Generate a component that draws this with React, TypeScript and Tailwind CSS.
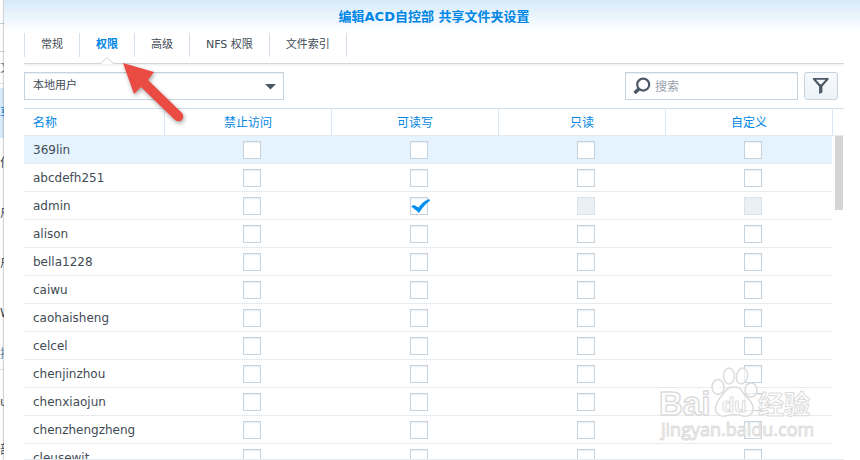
import React, { useState } from 'react';

type Access = 'deny' | 'write' | 'read' | 'custom';

interface UserRow {
    name: string;
    checked?: Access;
    disabled?: Access[];
}

const TABS = ['常规', '权限', '高级', 'NFS 权限', '文件索引'];

const COLUMNS: { id: Access; label: string }[] = [
    { id: 'deny', label: '禁止访问' },
    { id: 'write', label: '可读写' },
    { id: 'read', label: '只读' },
    { id: 'custom', label: '自定义' },
];

const USERS: UserRow[] = [
    { name: '369lin' },
    { name: 'abcdefh251' },
    { name: 'admin', checked: 'write', disabled: ['read', 'custom'] },
    { name: 'alison' },
    { name: 'bella1228' },
    { name: 'caiwu' },
    { name: 'caohaisheng' },
    { name: 'celcel' },
    { name: 'chenjinzhou' },
    { name: 'chenxiaojun' },
    { name: 'chenzhengzheng' },
    { name: 'cleusewit' },
];

// Sliver of the control panel that stays visible behind the dialog
const Backdrop: React.FC = () => (
    <div className="flex w-1 shrink-0 flex-col overflow-hidden bg-white text-xs whitespace-nowrap text-[#414b55]" aria-hidden="true">
        <div className="h-6 shrink-0 border-b border-[#c6d4e0]" />
        <div className="h-7 shrink-0 border-b border-[#c6d4e0]" />
        <div className="flex h-8 shrink-0 items-center border-b border-[#dfe7ee] text-[#6a8fae]">文</div>
        <div className="mt-1 flex h-[50px] shrink-0 items-center bg-[#d6ebfb] text-[#0086e5]">享</div>
        <div className="flex h-[50px] shrink-0 items-center">件</div>
        <div className="flex h-[50px] shrink-0 items-center">户</div>
        <div className="flex h-[50px] shrink-0 items-center">户</div>
        <div className="flex h-[50px] shrink-0 items-center">W</div>
        <div className="flex h-8 shrink-0 items-center border-b border-[#dfe7ee] text-[#6a8fae]">接</div>
        <div className="flex h-16 shrink-0 items-center">u</div>
        <div className="flex h-8 shrink-0 items-center">部</div>
    </div>
);

const SearchIcon: React.FC = () => (
    <svg className="shrink-0" width="18" height="18" viewBox="0 0 18 18" fill="none" stroke="#4b5865" aria-hidden="true">
        <circle cx="10.2" cy="7.6" r="6" strokeWidth="2.2" />
        <path d="M6.500 11.500 1.500 16" strokeWidth="3.6" />
    </svg>
);

const FilterIcon: React.FC = () => (
    <svg width="16" height="16" viewBox="0 0 16 16" aria-hidden="true">
        <path fill="#4b5865" fillRule="evenodd" d="M0 0h15.5v1.6L9.4 8.4V14.6L6.1 16V8.4L0 1.6ZM3 1.8 7.1 6.3h1.3L12.5 1.8Z" />
    </svg>
);

const CheckCell: React.FC<{ label: string; checked: boolean; disabled: boolean; onChange: () => void }> = ({ label, checked, disabled, onChange }) => (
    <label className="relative ml-2 inline-block size-[18px] align-top">
        <input
            type="checkbox"
            aria-label={label}
            checked={checked}
            disabled={disabled}
            onChange={onChange}
            className="block size-[18px] appearance-none border border-[#c6d3df] bg-white shadow-[inset_0_1px_1px_#eceff2] disabled:border-[#d8e3ed] disabled:bg-[#ebf0f4] disabled:shadow-none"
        />
        {checked && (
            <svg className="pointer-events-none absolute top-0 left-0 overflow-visible" width="20" height="18" viewBox="0 0 20 18" aria-hidden="true">
                <path fill="#058fee" d="M1.500 9 4 8 8.500 10.500C11 7 14.500 3.500 19 2L20 3.800C16 6.500 12.500 10.500 9.800 15L8.500 15.800C6.500 13.500 4 11.800 1.500 9.800Z" />
            </svg>
        )}
    </label>
);

const Watermark: React.FC = () => (
    <svg
        className="pointer-events-none absolute right-11 bottom-4 overflow-visible"
        width="156"
        height="76"
        viewBox="0 0 156 76"
        fill="#ffffff"
        fillOpacity="0.6"
        stroke="#dcdcdc"
        strokeWidth="1.5"
        strokeLinejoin="round"
        fontFamily='"Liberation Sans", "Noto Sans CJK SC", sans-serif'
        aria-hidden="true"
    >
        <text x="-1" y="47" fontSize="33" fontWeight="700">Bai</text>
        <ellipse cx="58" cy="19" rx="6" ry="7.5" />
        <ellipse cx="69" cy="8" rx="5.5" ry="8" />
        <ellipse cx="82" cy="8" rx="5.5" ry="8" transform="rotate(12 82 8)" />
        <ellipse cx="91" cy="22" rx="6" ry="7" />
        <path d="M66 22C70 18 79 18 82 23C85 29 92 32 93 39C94 46 89 49 83 48C77 46 71 46 65 48C58 49 54 44 56 38C57 32 62 28 66 22Z" />
        <text x="62" y="44" fontSize="20" fontWeight="700" strokeWidth="1">du</text>
        <text x="98" y="46" fontSize="26" fontWeight="700" strokeWidth="1">经验</text>
        <text x="1" y="68" fontSize="18" strokeWidth="1" fontFamily='"Open Sans", sans-serif'>jingyan.baidu.com</text>
    </svg>
);

const PointerArrow: React.FC = () => (
    <svg className="pointer-events-none absolute top-[62px] left-[118px] overflow-visible drop-shadow-[1px_2px_2px_rgba(0,0,0,0.35)]" width="66" height="62" viewBox="0 0 66 62" aria-hidden="true">
        <path fill="#ea4b43" d="M5 1 36 10 30 18 64 51C68 56 62 62 57 58L23 25 16 32Z" />
    </svg>
);

const App: React.FC = () => {
    const [activeTab, setActiveTab] = useState('权限');
    const [rows, setRows] = useState(USERS);
    const [selected, setSelected] = useState('369lin');

    const toggle = (name: string, access: Access) => {
        setRows(rows.map(r => (r.name === name ? { ...r, checked: r.checked === access ? undefined : access } : r)));
    };

    return (
        <div className='relative flex h-screen overflow-hidden bg-white font-["DejaVu_Sans","Noto_Sans_CJK_SC",sans-serif] text-[#414b55]'>
            <Backdrop />
            <main className="flex min-w-0 flex-1 flex-col bg-[linear-gradient(#d6eafa,#ffffff_32px)] pr-4 pl-5 shadow-[0_0_2px_rgba(0,0,0,0.5)]">
                <h1 className="flex h-[33px] shrink-0 items-center justify-center text-[13px] font-bold text-[#0086e5]">
                    编辑ACD自控部 共享文件夹设置
                </h1>

                <nav className="flex shrink-0 border-b border-[#d3d6d9] pb-1.5 shadow-[0_2px_2px_-1px_rgba(0,0,0,0.08)]">
                    <div className="flex border-l border-[#d5e0ea]" role="tablist">
                        {TABS.map(tab => (
                            <button
                                key={tab}
                                role="tab"
                                aria-selected={tab === activeTab}
                                onClick={() => setActiveTab(tab)}
                                className={`relative h-6 border-r border-[#d5e0ea] px-4 pt-px text-[11px] ${tab === activeTab ? 'font-bold text-[#0086e5]' : ''}`}
                            >
                                {tab}
                                {tab === activeTab && (
                                    <svg className="absolute top-6 left-1/2 -translate-x-1/2" width="14" height="7" viewBox="0 0 14 7" aria-hidden="true">
                                        <path d="M0 7 7 .5 14 7" fill="#ffffff" stroke="#cccfd2" />
                                    </svg>
                                )}
                            </button>
                        ))}
                    </div>
                </nav>

                <div className="mt-2 flex h-7 shrink-0 items-stretch gap-1.5 pr-1.5">
                    <div className="relative w-[260px]">
                        <select aria-label="用户类型" className="h-full w-full appearance-none border border-[#c6d3df] bg-white px-2 pt-px text-[11px] shadow-[inset_0_1px_1px_#eceff2]">
                            <option>本地用户</option>
                        </select>
                        <svg className="pointer-events-none absolute top-3 right-2" width="11" height="6" viewBox="0 0 11 6" aria-hidden="true">
                            <path fill="#4b5865" d="M0 0h11L5.5 5.5Z" />
                        </svg>
                    </div>
                    <label className="ml-auto flex w-[173px] items-center gap-1 border border-[#c6d3df] bg-white pl-[7px] shadow-[inset_0_1px_1px_#eceff2]">
                        <SearchIcon />
                        <input type="text" placeholder="搜索" aria-label="搜索" className="w-full min-w-0 pt-px text-xs outline-none placeholder:text-[#98a2ad]" />
                    </label>
                    <button aria-label="筛选" className="flex w-[34px] items-center justify-center rounded-[3px] border border-[#c6d3df] bg-linear-to-b from-[#f7fafd] to-[#ecf2f7]">
                        <FilterIcon />
                    </button>
                </div>

                <div className="mt-2 flex min-h-0 flex-1 overflow-hidden border-b border-[#e6e9ec]">
                    <div className="min-w-0 flex-1">
                        <table className="w-full table-fixed border-separate border-spacing-0">
                            <thead>
                                <tr className="h-7 text-xs text-[#0086e5]">
                                    <th className="w-[140px] border-y border-t-[#d0deea] border-b-[#e6e9ec] px-[9px] pt-0.5 pb-0 text-left font-normal">名称</th>
                                    {COLUMNS.map(col => (
                                        <th key={col.id} className="border-y border-l border-t-[#d0deea] border-b-[#e6e9ec] border-l-[#dbe7f2] px-0 pt-0.5 pb-0 font-normal">
                                            {col.label}
                                        </th>
                                    ))}
                                </tr>
                            </thead>
                            <tbody>
                                {rows.map(row => (
                                    <tr key={row.name} onClick={() => setSelected(row.name)} className={`h-7 ${row.name === selected ? 'bg-[#e5f3fe]' : ''}`}>
                                        <td className="border-b border-[#e9ebed] px-[9px] py-0 text-xs">{row.name}</td>
                                        {COLUMNS.map(col => (
                                            <td key={col.id} className="border-b border-[#e9ebed] p-0 text-center leading-none">
                                                <CheckCell
                                                    label={`${row.name} ${col.label}`}
                                                    checked={row.checked === col.id}
                                                    disabled={!!row.disabled?.includes(col.id)}
                                                    onChange={() => toggle(row.name, col.id)}
                                                />
                                            </td>
                                        ))}
                                    </tr>
                                ))}
                            </tbody>
                        </table>
                    </div>
                    <div className="flex w-3 shrink-0 flex-col items-end">
                        <div className="h-7 w-full border-y border-l border-t-[#d0deea] border-b-[#e6e9ec] border-l-[#dbe7f2]" />
                        <div className="mr-px h-[74px] w-2 bg-[#d3d5d7]" />
                    </div>
                </div>
            </main>
            <Watermark />
            <PointerArrow />
        </div>
    );
};

export default App;
